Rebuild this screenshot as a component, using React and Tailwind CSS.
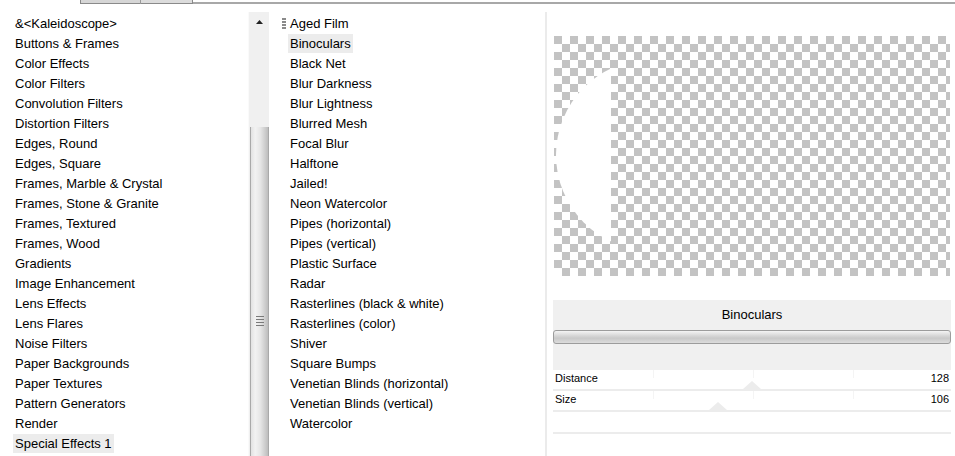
import React from 'react';

const categories = [
  '&<Kaleidoscope>',
  'Buttons & Frames',
  'Color Effects',
  'Color Filters',
  'Convolution Filters',
  'Distortion Filters',
  'Edges, Round',
  'Edges, Square',
  'Frames, Marble & Crystal',
  'Frames, Stone & Granite',
  'Frames, Textured',
  'Frames, Wood',
  'Gradients',
  'Image Enhancement',
  'Lens Effects',
  'Lens Flares',
  'Noise Filters',
  'Paper Backgrounds',
  'Paper Textures',
  'Pattern Generators',
  'Render',
  'Special Effects 1',
];

const effects = [
  'Aged Film',
  'Binoculars',
  'Black Net',
  'Blur Darkness',
  'Blur Lightness',
  'Blurred Mesh',
  'Focal Blur',
  'Halftone',
  'Jailed!',
  'Neon Watercolor',
  'Pipes (horizontal)',
  'Pipes (vertical)',
  'Plastic Surface',
  'Radar',
  'Rasterlines (black & white)',
  'Rasterlines (color)',
  'Shiver',
  'Square Bumps',
  'Venetian Blinds (horizontal)',
  'Venetian Blinds (vertical)',
  'Watercolor',
];

const params = [
  { label: 'Distance', value: 128, thumb: 199 },
  { label: 'Size', value: 106, thumb: 165 },
];

const ListItem = ({ text, selected }) => (
  <div className="h-[20px] flex items-center">
    <span
      className={`px-[2px] leading-[19px] whitespace-nowrap ${selected ? 'bg-[#ececec]' : ''}`}
    >
      {text}
    </span>
  </div>
);

const Preview = () => (
  <svg width="396" height="240" viewBox="0 0 396 240" className="block">
    <defs>
      <pattern id="checker" width="16" height="16" patternUnits="userSpaceOnUse">
        <rect width="16" height="16" fill="#ffffff" />
        <rect width="8" height="8" fill="#c3c3c3" />
        <rect x="8" y="8" width="8" height="8" fill="#c3c3c3" />
      </pattern>
      <clipPath id="lens">
        <rect x="0" y="0" width="57" height="240" />
      </clipPath>
    </defs>
    <rect width="396" height="240" fill="url(#checker)" />
    <ellipse cx="96" cy="119" rx="94" ry="95" fill="#ffffff" clipPath="url(#lens)" />
  </svg>
);

export default function App() {
  return (
    <div className="w-[955px] h-[456px] overflow-hidden bg-white text-black font-['Liberation_Sans',Arial,sans-serif] text-[13px] flex flex-col">
      {/* top tab strip */}
      <div className="h-[4px] flex shrink-0">
        <div className="w-[80px]" />
        <div className="w-[60px] bg-[#d6d6d6] border-l border-b border-[#8a8a8a]" />
        <div className="w-[1px] bg-[#9a9a9a]" />
        <div className="w-[52px] bg-[#dcdcdc] border-b border-r border-[#8a8a8a]" />
        <div className="flex-1 border-b-2 border-[#a8a8a8]" />
      </div>

      <div className="flex flex-1 min-h-0">
        {/* categories */}
        <div className="w-[248px] pl-[13px] pt-[9px] shrink-0">
          {categories.map((c) => (
            <ListItem key={c} text={c} selected={c === 'Special Effects 1'} />
          ))}
        </div>

        {/* scrollbar */}
        <div className="w-[21px] pt-[8px] shrink-0 flex flex-col">
          <div className="flex-1 bg-[#f0f0f0] border-l border-[#fafafa] flex flex-col">
            <div className="h-[20px] flex items-center justify-center">
              <svg width="7" height="4" viewBox="0 0 7 4">
                <path d="M0 4 L3.5 0 L7 4 Z" fill="#222" />
              </svg>
            </div>
            <div className="h-[95px]" />
            <div className="flex-1 ml-[1px] border-l border-r border-[#a9a9a9] bg-[linear-gradient(to_right,#e2e2e2,#f2f2f2_25%,#e6e6e6_55%,#cbcbcb_85%,#bdbdbd)] flex flex-col items-center">
              <div className="h-[189px]" />
              <svg width="8" height="10" viewBox="0 0 8 10">
                <rect x="0" y="0" width="8" height="1" fill="#7a7a7a" />
                <rect x="0" y="3" width="8" height="1" fill="#7a7a7a" />
                <rect x="0" y="6" width="8" height="1" fill="#7a7a7a" />
                <rect x="0" y="9" width="8" height="1" fill="#7a7a7a" />
              </svg>
            </div>
          </div>
        </div>

        {/* effects */}
        <div className="w-[276px] pl-[19px] pt-[9px] shrink-0">
          {effects.map((e, i) => (
            <div key={e} className="flex">
              {i === 0 && (
                <svg width="5" height="11" viewBox="0 0 5 11" className="-ml-[6px] mt-[5px] mr-[1px]">
                  <rect x="0" y="0" width="4" height="2" fill="#8a8a8a" />
                  <rect x="0" y="3" width="4" height="2" fill="#8a8a8a" />
                  <rect x="0" y="6" width="4" height="2" fill="#8a8a8a" />
                  <rect x="0" y="9" width="4" height="2" fill="#8a8a8a" />
                </svg>
              )}
              <ListItem text={e} selected={e === 'Binoculars'} />
            </div>
          ))}
        </div>

        {/* divider */}
        <div className="w-[2px] mt-[8px] bg-[#ebebeb] shrink-0" />

        {/* preview & settings */}
        <div className="flex-1 pl-[6px] pt-[32px]">
          <div className="ml-[1px]">
            <Preview />
          </div>

          <div className="w-[398px] mt-[24px]">
            <div className="bg-[#f0f0f0] h-[70px] pt-[5px] flex flex-col">
              <div className="h-[20px] leading-[20px] text-center">Binoculars</div>
              <div className="mt-[5px] h-[14px] rounded-[3px] border border-[#9c9c9c] bg-[linear-gradient(to_bottom,#f4f4f4,#dadada_35%,#c9c9c9_60%,#dcdcdc)]" />
            </div>

            {params.map((p) => (
              <div
                key={p.label}
                className="relative h-[21px] border-b-2 border-[#ececec] flex items-center justify-between px-[2px] text-[11px]"
              >
                <span className="relative z-10 -mt-[2px]">{p.label}</span>
                <span className="relative z-10 -mt-[2px]">{p.value}</span>
                <div className="absolute left-[100px] top-0 w-px h-[8px] bg-[#f4f4f4]" />
                <div className="absolute left-[200px] top-0 w-px h-[8px] bg-[#f4f4f4]" />
                <div className="absolute left-[300px] top-0 w-px h-[8px] bg-[#f4f4f4]" />
                <svg
                  width="18"
                  height="8"
                  viewBox="0 0 18 8"
                  className="absolute bottom-0"
                  style={{ left: p.thumb - 9 }}
                >
                  <path d="M0 8 L9 0 L18 8 Z" fill="#ececec" />
                </svg>
              </div>
            ))}
            <div className="h-[22px] border-b-2 border-[#ececec]" />
          </div>
        </div>
      </div>
    </div>
  );
}
